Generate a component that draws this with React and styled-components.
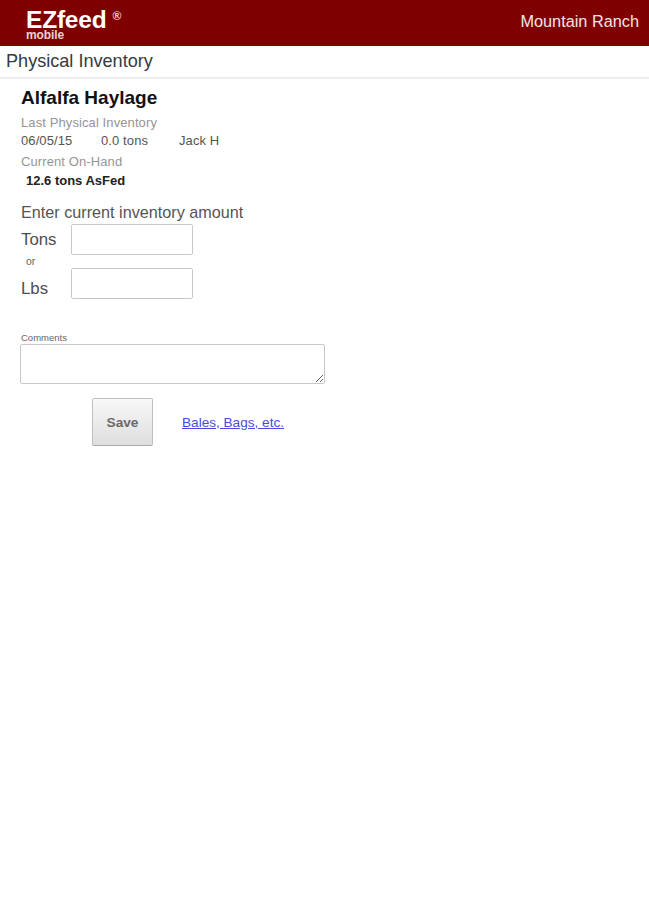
import React from "react";
import styled, { createGlobalStyle } from "styled-components";

const GlobalStyle = createGlobalStyle`
  html, body {
    margin: 0;
    padding: 0;
    background: #ffffff;
    font-family: "Liberation Sans", Arial, sans-serif;
  }
`;

const Page = styled.div`
  width: 649px;
  height: 900px;
  overflow: hidden;
  background: #ffffff;
`;

const Header = styled.header`
  height: 46px;
  background: #7f0000;
  display: flex;
  justify-content: space-between;
  padding: 0 10px 0 26px;
  color: #ffffff;
`;

const Logo = styled.div`
  display: flex;
  flex-direction: column;
  padding-top: 9px;
`;

const LogoName = styled.div`
  font-size: 24.5px;
  line-height: 21px;
  font-weight: bold;
  letter-spacing: -0.2px;
`;

const Registered = styled.sup`
  font-size: 12px;
  font-weight: bold;
  line-height: 0;
  vertical-align: 8px;
  margin-left: 6px;
  color: #e8d0d0;
`;

const LogoSub = styled.div`
  font-size: 12px;
  line-height: 11px;
  font-weight: bold;
  letter-spacing: -0.1px;
  color: #e8d4d4;
`;

const Ranch = styled.div`
  font-size: 16.3px;
  line-height: 16px;
  padding-top: 13px;
  color: #f1e6e6;
`;

const TitleBar = styled.div`
  height: 26px;
  padding: 5px 0 0 6px;
  border-bottom: 2px solid #eeeeee;
  font-size: 18.1px;
  line-height: 21px;
  color: #333a40;
`;

const Content = styled.main`
  padding: 8px 0 0 21px;
`;

const ItemName = styled.h1`
  margin: 0 0 8px;
  font-size: 19px;
  line-height: 21px;
  font-weight: bold;
  color: #111111;
`;

const Caption = styled.div`
  font-size: 13px;
  letter-spacing: 0.1px;
  line-height: 14px;
  color: #959595;
  margin-bottom: ${(p) => p.$gap || 4}px;
`;

const InfoRow = styled.div`
  display: flex;
  font-size: 13px;
  letter-spacing: 0.1px;
  line-height: 14px;
  color: #555555;
  margin-bottom: 7px;
`;

const InfoCell = styled.span`
  width: ${(p) => p.$width}px;
`;

const OnHand = styled.div`
  font-size: 13px;
  line-height: 14px;
  font-weight: bold;
  color: #222222;
  padding-left: 5px;
  margin-bottom: 16px;
`;

const Prompt = styled.div`
  font-size: 16.2px;
  line-height: 17px;
  color: #555555;
  margin-bottom: 3px;
`;

const FieldRow = styled.div`
  display: flex;
  align-items: center;
  height: 31px;
`;

const FieldLabel = styled.label`
  width: 50px;
  font-size: 16.8px;
  color: #4a4f55;
  position: relative;
  top: ${(p) => p.$nudge || 0}px;
`;

const TextInput = styled.input`
  width: 122px;
  height: 31px;
  box-sizing: border-box;
  border: 1px solid #c8c8c8;
  border-radius: 2px;
  background: #ffffff;
  padding: 0 4px;
`;

const OrText = styled.div`
  font-size: 10.5px;
  line-height: 13px;
  color: #666666;
  padding-left: 5px;
`;

const CommentsLabel = styled.label`
  display: block;
  margin: 33px 0 1px;
  font-size: 9.5px;
  line-height: 11px;
  color: #666666;
`;

const CommentsBox = styled.textarea`
  display: block;
  width: 305px;
  height: 40px;
  box-sizing: border-box;
  border: 1px solid #c8c8c8;
  border-radius: 2px;
  background: #ffffff;
  margin: 0 0 0 -1px;
  padding: 2px;
`;

const Actions = styled.div`
  display: flex;
  align-items: center;
  margin: 14px 0 0 71px;
`;

const SaveButton = styled.button`
  width: 61px;
  height: 48px;
  border: 1px solid #c0c0c0;
  border-bottom-color: #a8a8a8;
  border-radius: 2px;
  background: linear-gradient(180deg, #f8f8f8 0%, #dedede 100%);
  font-family: inherit;
  font-size: 13.7px;
  font-weight: bold;
  color: #6a6a6a;
  padding: 0;
`;

const MoreLink = styled.a`
  margin-left: 29px;
  font-size: 13.6px;
  color: #4a4ae0;
  text-decoration: underline;
`;

const App = () => {
  return (
    <Page>
      <GlobalStyle />
      <Header>
        <Logo>
          <LogoName>
            EZfeed<Registered>®</Registered>
          </LogoName>
          <LogoSub>mobile</LogoSub>
        </Logo>
        <Ranch>Mountain Ranch</Ranch>
      </Header>
      <TitleBar>Physical Inventory</TitleBar>
      <Content>
        <ItemName>Alfalfa Haylage</ItemName>
        <Caption>Last Physical Inventory</Caption>
        <InfoRow>
          <InfoCell $width={80}>06/05/15</InfoCell>
          <InfoCell $width={78}>0.0 tons</InfoCell>
          <InfoCell $width={60}>Jack H</InfoCell>
        </InfoRow>
        <Caption $gap={5}>Current On-Hand</Caption>
        <OnHand>12.6 tons AsFed</OnHand>
        <Prompt>Enter current inventory amount</Prompt>
        <FieldRow>
          <FieldLabel>Tons</FieldLabel>
          <TextInput />
        </FieldRow>
        <OrText>or</OrText>
        <FieldRow>
          <FieldLabel $nudge={5}>Lbs</FieldLabel>
          <TextInput />
        </FieldRow>
        <CommentsLabel>Comments</CommentsLabel>
        <CommentsBox />
        <Actions>
          <SaveButton>Save</SaveButton>
          <MoreLink href="#">Bales, Bags, etc.</MoreLink>
        </Actions>
      </Content>
    </Page>
  );
};

export default App;
